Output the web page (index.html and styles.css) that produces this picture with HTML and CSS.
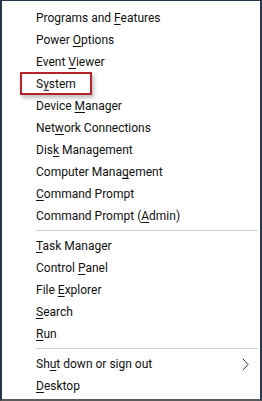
FILE: index.html
```html
<!DOCTYPE html>
<html lang="en">
<head>
    <meta charset="UTF-8">
    <title>Quick Link Menu</title>
    <link rel="stylesheet" href="styles.css">
</head>
<body>
    <div class="menu">
        <ul class="group">
            <li class="item">Programs and <u>F</u>eatures</li>
            <li class="item">Power <u>O</u>ptions</li>
            <li class="item">Event <u>V</u>iewer</li>
            <li class="item highlight">S<u>y</u>stem</li>
            <li class="item">Device <u>M</u>anager</li>
            <li class="item">Net<u>w</u>ork Connections</li>
            <li class="item">Dis<u>k</u> Management</li>
            <li class="item">Computer Mana<u>g</u>ement</li>
            <li class="item"><u>C</u>ommand Prompt</li>
            <li class="item">Command Prompt (<u>A</u>dmin)</li>
        </ul>
        <div class="separator"></div>
        <ul class="group">
            <li class="item"><u>T</u>ask Manager</li>
            <li class="item">Control <u>P</u>anel</li>
            <li class="item">File <u>E</u>xplorer</li>
            <li class="item"><u>S</u>earch</li>
            <li class="item"><u>R</u>un</li>
        </ul>
        <div class="separator"></div>
        <ul class="group">
            <li class="item submenu">
                <span>Sh<u>u</u>t down or sign out</span>
                <svg class="chevron" width="7" height="13" viewBox="0 0 7 13">
                    <path d="M0.8 0.8 L6 6.5 L0.8 12.2" fill="none" stroke="#333" stroke-width="1"/>
                </svg>
            </li>
            <li class="item"><u>D</u>esktop</li>
        </ul>
    </div>
</body>
</html>
```

FILE: styles.css
```css
body {
    margin: 0;
    padding: 0;
    background-color: #fff;
}
.menu {
    box-sizing: border-box;
    width: 262px;
    height: 401px;
    padding-top: 6px;
    background-color: #fff;
    border: 2px solid #27364a;
    border-top-width: 1px;
    border-bottom-color: #5a5a5a;
    font-family: Roboto, 'Liberation Sans', sans-serif;
    font-size: 12px;
    color: #111;
}
.group {
    list-style: none;
    margin: 0;
    padding: 0;
}
.item {
    height: 22px;
    line-height: 22px;
    padding-left: 34px;
    padding-right: 11px;
    white-space: nowrap;
}
.item u {
    text-decoration-thickness: 1px;
    text-underline-offset: 2px;
}
.highlight {
    position: relative;
}
.highlight::before {
    content: "";
    position: absolute;
    left: 18px;
    top: -1px;
    width: 68px;
    height: 19px;
    border: 2px solid #b8232b;
    box-shadow: 2px 3px 4px rgba(0, 0, 0, 0.25);
}
.submenu {
    display: flex;
    align-items: center;
    justify-content: space-between;
}
.chevron {
    display: block;
}
.separator {
    height: 1px;
    margin: 3px 2px 4px 34px;
    background-color: #d0d0d0;
}
```
